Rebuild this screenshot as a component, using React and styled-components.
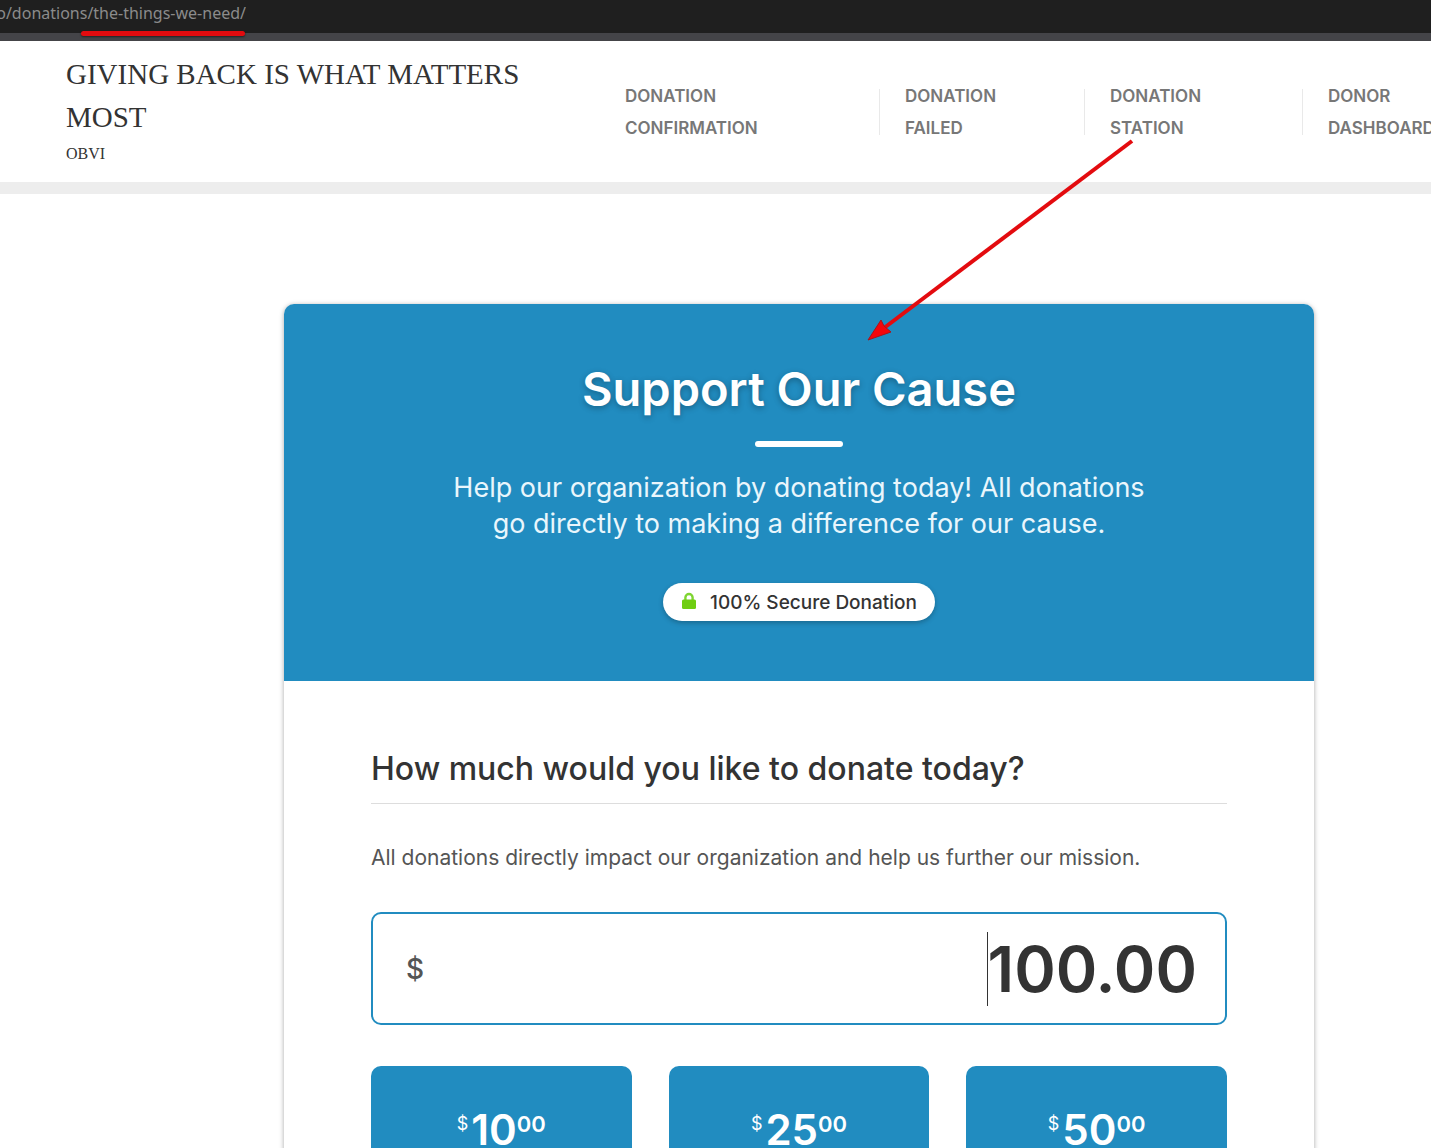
import React from "react";
import styled, { createGlobalStyle } from "styled-components";

const BLUE = "#218cc0";
const SANS = `Inter, "Open Sans", "Liberation Sans", sans-serif`;

const GlobalStyle = createGlobalStyle`
  *, *::before, *::after { box-sizing: border-box; }
  body { margin: 0; background: #fff; color: #333; font-family: ${SANS}; }
  h1, h2, p, ul { margin: 0; padding: 0; }
`;

const Screen = styled.div`
  position: relative;
  height: 100vh;
  overflow: hidden;
`;

const AddressBar = styled.div`
  height: 41px;
  background: #1f1f1f;
  border-bottom: 8px solid #444448;
`;

const Address = styled.div`
  display: flex;
  justify-content: flex-end;
  width: 246px;
  overflow: hidden;
  color: #8b8b8b;
  font: 16px/26px "Noto Sans", sans-serif;
  white-space: nowrap;
`;

const SiteHeader = styled.header`
  display: flex;
  align-items: flex-start;
  padding: 12px 0 14px 66px;
  border-bottom: 12px solid #ededed;
`;

const Brand = styled.div`
  flex: 0 0 559px;
  padding-right: 80px;
  font-family: "Liberation Serif", "Times New Roman", serif;
`;

const SiteTitle = styled.p`
  font-size: 29px;
  line-height: 43px;
  text-transform: uppercase;
`;

const Tagline = styled.p`
  font-size: 16px;
  line-height: 29px;
`;

const NavList = styled.ul`
  display: flex;
  list-style: none;
  padding-top: 27px;
`;

const NavItem = styled.li`
  display: flex;
  align-items: center;
  flex: 0 0 ${(p) => p.$width}px;

  &:not(:first-child)::before {
    content: "";
    flex: none;
    width: 1px;
    height: 46px;
    margin-right: 25px;
    background: #e9e9e9;
  }
`;

const NavLink = styled.a`
  width: min-content;
  color: #777;
  font-size: 17px;
  font-weight: 600;
  line-height: 32px;
  text-decoration: none;
  text-transform: uppercase;
`;

const Main = styled.main`
  padding: 110px 117px 0 284px;
`;

const Card = styled.form`
  border-radius: 10px;
  box-shadow: 0 1px 5px rgba(0, 0, 0, 0.35);
`;

const CardHeader = styled.div`
  display: flex;
  flex-direction: column;
  align-items: center;
  padding: 60px 87px;
  border-radius: 10px 10px 0 0;
  background: ${BLUE};
  color: #fff;
  text-align: center;
`;

const CardTitle = styled.h1`
  font-size: 47px;
  font-weight: 600;
  line-height: 50px;
  text-shadow: 0 2px 6px rgba(0, 0, 0, 0.3);
`;

const Rule = styled.div`
  width: 88px;
  height: 6px;
  margin: 27px 0 23px;
  border-radius: 3px;
  background: #fff;
`;

const Lead = styled.p`
  max-width: 710px;
  color: #e9f6fc;
  font-size: 27px;
  line-height: 36px;
`;

const SecureBadge = styled.div`
  display: flex;
  align-items: center;
  gap: 14px;
  height: 38px;
  margin-top: 41px;
  padding: 0 18px 0 19px;
  border-radius: 19px;
  background: #fff;
  box-shadow: 0 2px 5px rgba(0, 0, 0, 0.25);
  color: #333;
  font-size: 19px;
  font-weight: 500;
`;

const CardBody = styled.div`
  padding: 70px 87px 88px;
`;

const Question = styled.h2`
  padding-bottom: 16px;
  border-bottom: 1px solid #ddd;
  font-size: 32px;
  font-weight: 500;
  line-height: 36px;
`;

const Intro = styled.p`
  margin: 38px 0;
  color: #555;
  font-size: 21px;
  line-height: 32px;
`;

const AmountBox = styled.label`
  display: flex;
  align-items: center;
  height: 113px;
  padding: 0 28px 0 33px;
  border: 2px solid ${BLUE};
  border-radius: 10px;
`;

const Currency = styled.span`
  margin-right: auto;
  color: #555;
  font-size: 28px;
  font-weight: 500;
`;

const Caret = styled.span`
  width: 1px;
  height: 74px;
  background: #333;
`;

const AmountInput = styled.input`
  field-sizing: content;
  min-width: 100px;
  padding: 0;
  border: 0;
  outline: 0;
  background: transparent;
  color: #333;
  font: 600 63px/74px ${SANS};
  text-align: right;
`;

const Levels = styled.div`
  display: grid;
  grid-template-columns: repeat(3, 1fr);
  gap: 37px;
  margin-top: 41px;
`;

const LevelButton = styled.button`
  display: flex;
  align-items: flex-start;
  justify-content: center;
  padding: 48px 16px;
  border: 0;
  border-radius: 10px;
  background: ${BLUE};
  color: #fff;
  font: 600 42px/32px ${SANS};
`;

const Sign = styled.span`
  margin-right: 3px;
  font-size: 18px;
  font-weight: 400;
  line-height: 20px;
`;

const Cents = styled.span`
  font-size: 22px;
  line-height: 20px;
`;

const UrlMark = styled.div`
  position: absolute;
  top: 31px;
  left: 81px;
  width: 164px;
  height: 5px;
  border-radius: 3px;
  background: #e30b0f;
  box-shadow: 0 1px 2px rgba(0, 0, 0, 0.5);
`;

const Arrow = styled.svg`
  position: absolute;
  top: 136px;
  left: 860px;
  pointer-events: none;
`;

const navItems = [
  { label: "Donation Confirmation", width: 254 },
  { label: "Donation Failed", width: 205 },
  { label: "Donation Station", width: 218 },
  { label: "Donor Dashboard", width: 200 },
];

const levels = ["10", "25", "50"];

const LockIcon = () => (
  <svg width="14" height="20" viewBox="0 0 14 20" aria-hidden="true">
    <path d="M3.4 9V5.6a3.6 3.6 0 0 1 7.2 0V9" fill="none" stroke="#7fd532" strokeWidth="2.4" />
    <rect y="7.5" width="14" height="9.5" rx="1.5" fill="#6fce12" />
  </svg>
);

export default function App() {
  return (
    <Screen>
      <GlobalStyle />
      <AddressBar>
        <Address>o/donations/the-things-we-need/</Address>
      </AddressBar>
      <SiteHeader>
        <Brand>
          <SiteTitle>Giving back is what matters most</SiteTitle>
          <Tagline>OBVI</Tagline>
        </Brand>
        <nav>
          <NavList>
            {navItems.map((item) => (
              <NavItem key={item.label} $width={item.width}>
                <NavLink href="#">{item.label}</NavLink>
              </NavItem>
            ))}
          </NavList>
        </nav>
      </SiteHeader>
      <Main>
        <Card>
          <CardHeader>
            <CardTitle>Support Our Cause</CardTitle>
            <Rule />
            <Lead>
              Help our organization by donating today! All donations go directly to making a
              difference for our cause.
            </Lead>
            <SecureBadge>
              <LockIcon />
              100% Secure Donation
            </SecureBadge>
          </CardHeader>
          <CardBody>
            <Question>How much would you like to donate today?</Question>
            <Intro>
              All donations directly impact our organization and help us further our mission.
            </Intro>
            <AmountBox>
              <Currency>$</Currency>
              <Caret />
              <AmountInput type="text" inputMode="decimal" defaultValue="100.00" />
            </AmountBox>
            <Levels>
              {levels.map((amount) => (
                <LevelButton type="button" key={amount}>
                  <Sign>$</Sign>
                  {amount}
                  <Cents>00</Cents>
                </LevelButton>
              ))}
            </Levels>
          </CardBody>
        </Card>
      </Main>
      <UrlMark />
      <Arrow width="280" height="212" viewBox="0 0 280 212" aria-hidden="true">
        <path d="M272 5 24 192" stroke="#e30b0f" strokeWidth="4" />
        <path d="M8 204 21 184 24 190 31 196Z" fill="#f5050a" stroke="#a8141c" strokeWidth="1" />
      </Arrow>
    </Screen>
  );
}
